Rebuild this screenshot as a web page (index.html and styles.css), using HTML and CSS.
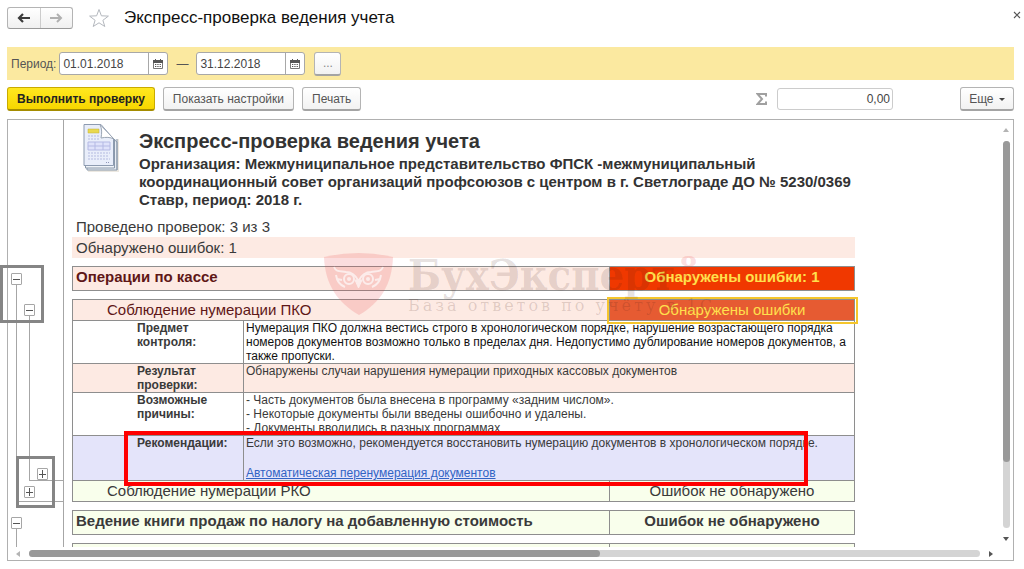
FILE: index.html
```html
<!DOCTYPE html>
<html lang="ru">
<head>
<meta charset="utf-8">
<meta name="viewport" content="width=device-width, initial-scale=1">
<title>Экспресс-проверка ведения учета</title>
<link rel="stylesheet" href="styles.css">
</head>
<body>
<header class="titlebar">
  <div class="nav">
    <button type="button" class="nav-btn" aria-label="Назад"><svg width="14" height="10" viewBox="0 0 14 10"><path d="M6 1 2 5l4 4M2.500 5H13" fill="none" stroke="#3c3c3c" stroke-width="2.200"/></svg></button>
    <button type="button" class="nav-btn" aria-label="Вперед"><svg width="14" height="10" viewBox="0 0 14 10"><path d="m8 1 4 4-4 4M11.500 5H1" fill="none" stroke="#b0b0b0" stroke-width="2"/></svg></button>
  </div>
  <button type="button" class="icon-btn star" aria-label="В избранное"><svg width="22" height="20" viewBox="0 0 22 20"><path d="m11 1.500 2.400 6.300 7 .3-5.500 4.200 1.900 6.200L11 14.800l-5.800 3.700 1.900-6.200L1.600 8.100l7-.3z" fill="#fff" stroke="#b4b8be"/></svg></button>
  <h1 class="title">Экспресс-проверка ведения учета</h1>
  <button type="button" class="icon-btn close" aria-label="Закрыть"><svg width="8" height="8" viewBox="0 0 8 8"><path d="m1 1 6 6M7 1 1 7" stroke="#555" stroke-width="1.100"/></svg></button>
</header>

<section class="period">
  <label for="from">Период:</label>
  <div class="field">
    <input id="from" type="text" value="01.01.2018">
    <button type="button" aria-label="Выбрать начало"><svg width="10" height="10" viewBox="0 0 10 10"><path d="M.5 1.500h9v8h-9z" fill="#fff" stroke="#777"/><path d="M0 1h10v3H0zM2 0h1v2H2zM7 0h1v2H7z" fill="#555"/><path d="M2 5.500h6M2 7.500h6" stroke="#555" stroke-dasharray="1.300 1"/></svg></button>
  </div>
  <span class="dash">—</span>
  <div class="field">
    <input type="text" value="31.12.2018" aria-label="Конец периода">
    <button type="button" aria-label="Выбрать конец"><svg width="10" height="10" viewBox="0 0 10 10"><path d="M.5 1.500h9v8h-9z" fill="#fff" stroke="#777"/><path d="M0 1h10v3H0zM2 0h1v2H2zM7 0h1v2H7z" fill="#555"/><path d="M2 5.500h6M2 7.500h6" stroke="#555" stroke-dasharray="1.300 1"/></svg></button>
  </div>
  <button type="button" class="btn more-dots">...</button>
</section>

<section class="commands">
  <button type="button" class="btn primary">Выполнить проверку</button>
  <button type="button" class="btn">Показать настройки</button>
  <button type="button" class="btn">Печать</button>
  <label class="sigma" for="sum" aria-label="Сумма"><svg width="11" height="12" viewBox="0 0 11 12"><path d="M10 3.500V1H1.500L6 6l-4.500 5H10V8.500" fill="none" stroke="#a0a0a0" stroke-width="2"/></svg></label>
  <input id="sum" class="sum" type="text" value="0,00">
  <button type="button" class="btn more">Еще <span class="caret"></span></button>
</section>

<main class="viewer">
  <div class="outline">
    <div class="node first">
      <button type="button" class="toggle" aria-label="Свернуть"></button>
      <div class="branch outer">
        <div class="node">
          <button type="button" class="toggle" aria-label="Свернуть"></button>
          <div class="branch inner">
            <button type="button" class="toggle plus" aria-label="Развернуть"></button>
          </div>
        </div>
        <button type="button" class="toggle plus" aria-label="Развернуть"></button>
      </div>
    </div>
    <div class="node last">
      <button type="button" class="toggle" aria-label="Свернуть"></button>
      <div class="branch open"></div>
    </div>
  </div>

  <div class="sheet">
    <div class="report">
      <div class="head">
        <svg class="doc" width="38" height="50" viewBox="0 0 38 50">
          <path d="M5 5h27l4 8v35H5z" fill="#d9d2c4" opacity=".5"/>
          <path d="M4 5h30v41H4z" fill="#e8edf4" stroke="#8a99ab"/>
          <path d="M2.500 3h29v41h-29z" fill="#eff3f8" stroke="#8a99ab"/>
          <path d="M17 0h20v15H30.500z" fill="#fff"/>
          <path d="M1 .5h17L30.500 15v26.500H1z" fill="#e9eefa" stroke="#8d9bb0"/>
          <path d="M30.500 15 34 18v28" fill="none" stroke="#8a99ab"/>
          <path d="M17 .5 31 15c-4-2-8-2-13-1 1-5 1-9-1-13.500z" fill="#fff" stroke="#9aa5b4"/>
          <path d="M5 5h11v4H5z" fill="#e9d94f" stroke="#c3b23c" stroke-width=".5"/>
          <path d="M5 12h11M5 15h12" stroke="#b4bbe0" stroke-dasharray="2 1"/>
          <path d="M5 18h22v8H5zM5 22h22M12 18v8M20 18v8" fill="#dfe2fa" stroke="#b4b9e4"/>
          <path d="M5 29h22M5 32h21M5 35h22" stroke="#b4bbe0" stroke-dasharray="2 1"/>
          <path d="M23 38.500h4" stroke="#8f96b8" stroke-dasharray="1 1"/>
        </svg>
        <div>
          <h2>Экспресс-проверка ведения учета</h2>
          <p class="org">Организация: Межмуниципальное представительство ФПСК -межмуниципальный<br>координационный совет организаций профсоюзов с центром в г. Светлограде ДО № 5230/0369<br>Ставр, период: 2018 г.</p>
        </div>
      </div>
      <p class="stat">Проведено проверок: 3 из 3</p>
      <p class="stat bad">Обнаружено ошибок: 1</p>

      <table class="tbl section">
        <colgroup><col><col class="c-status"></colgroup>
        <tr class="bad"><th scope="row">Операции по кассе</th><td class="status alarm">Обнаружены ошибки: 1</td></tr>
      </table>

      <table class="tbl checks">
        <colgroup><col class="c-label"><col><col class="c-status"></colgroup>
        <tr class="check bad"><td colspan="2" class="name">Соблюдение нумерации ПКО</td><td class="status alarm selected">Обнаружены ошибки</td></tr>
        <tr class="detail subject"><th scope="row">Предмет контроля:</th><td colspan="2">Нумерация ПКО должна вестись строго в хронологическом порядке, нарушение возрастающего порядка<br>номеров документов возможно только в пределах дня. Недопустимо дублирование номеров документов, а<br>также пропуски.</td></tr>
        <tr class="detail bad"><th scope="row">Результат проверки:</th><td colspan="2">Обнаружены случаи нарушения нумерации приходных кассовых документов</td></tr>
        <tr class="detail"><th scope="row">Возможные причины:</th><td colspan="2">- Часть документов была внесена в программу «задним числом».<br>- Некоторые документы были введены ошибочно и удалены.<br>- Документы вводились в разных программах</td></tr>
        <tr class="detail advice"><th scope="row">Рекомендации:</th><td colspan="2"><p>Если это возможно, рекомендуется восстановить нумерацию документов в хронологическом порядке.</p><a href="#">Автоматическая перенумерация документов</a></td></tr>
        <tr class="check good"><td colspan="2" class="name">Соблюдение нумерации РКО</td><td class="status">Ошибок не обнаружено</td></tr>
      </table>

      <table class="tbl section">
        <colgroup><col><col class="c-status"></colgroup>
        <tr class="good"><th scope="row">Ведение книги продаж по налогу на добавленную стоимость</th><td class="status">Ошибок не обнаружено</td></tr>
      </table>
      <table class="tbl section">
        <colgroup><col><col class="c-status"></colgroup>
        <tr class="good"><td></td><td></td></tr>
      </table>

      <div class="watermark">
        <svg width="70" height="62" viewBox="0 0 70 62">
          <path d="M0 4Q35-4 69 4C68 32 56 50 35 62 14 50 1 32 0 4z" fill="#e8353c" opacity=".17"/>
          <g fill="none" stroke="#fff" opacity=".65">
            <circle cx="25" cy="26" r="5" stroke-width="2"/><circle cx="44" cy="26" r="5" stroke-width="2"/>
            <path d="M10 14c2 5 6 4 12 5 6 0 10 4 12.500 9C37 23 41 19 47 19c6-1 10 0 12-5M12 22c1 7 4 10 9 12M57 22c-1 7-4 10-9 12M13 26l5 1M56 26l-5 1" stroke-width="2"/>
            <path d="m31 27 3.500 8 3.500-8z" fill="#fff"/>
          </g>
          <g fill="#fff" opacity=".65"><circle cx="25" cy="26" r="2"/><circle cx="44" cy="26" r="2"/></g>
        </svg>
        <div>
          <div class="brand">БухЭксперт<span class="brand-8">8</span></div>
          <div class="tagline">База ответов по учёту в 1С</div>
        </div>
      </div>
      <div class="mark mark-red"></div>
    </div>
  </div>

  <div class="vscroll"><i class="arrow up"></i><div class="track"><div class="thumb"></div></div><i class="arrow down"></i></div>
  <div class="hscroll"><i class="arrow left"></i><div class="track"><div class="thumb"></div></div><i class="arrow right"></i></div>
  <div class="mark mark-top"></div>
  <div class="mark mark-bottom"></div>
</main>
</body>
</html>
```
FILE: styles.css
```css
* { box-sizing: border-box; }
body {
  margin: 0;
  height: 100vh;
  padding: 6px 10px 8px 7px;
  display: flex;
  flex-direction: column;
  background: #fff;
  color: #444;
  font: 12px/14px "Liberation Sans", Arial, sans-serif;
}
h1, h2, p { margin: 0; }
button, input { font: inherit; color: inherit; margin: 0; }
button { padding: 0; }
svg { display: block; }

.titlebar { display: flex; align-items: center; height: 24px; }
.nav {
  display: flex;
  width: 66px;
  height: 22px;
  border: 1px solid #b4b4b4;
  border-bottom-color: #999;
  border-radius: 3px;
  background: linear-gradient(#fff, #f0f0f0);
}
.nav-btn { flex: 1; display: grid; place-items: center; border: 0; background: none; }
.nav-btn + .nav-btn { border-left: 1px solid #ccc; }
.icon-btn { border: 0; background: none; }
.star { margin: 0 14px 0 15px; }
.title { font-size: 17px; font-weight: 400; line-height: 20px; color: #111; }
.close { margin: 0 -7px 6px auto; }

.period {
  display: flex;
  align-items: center;
  height: 33px;
  margin-top: 17px;
  padding-left: 4px;
  color: #555;
  background: #fbe9a0;
}
.field {
  display: flex;
  width: 109px;
  height: 23px;
  margin-left: 3px;
  border: 1px solid #a8a8a8;
  border-radius: 3px;
  background: #fff;
  overflow: hidden;
}
.field input { flex: 1; min-width: 0; padding: 0 3px; border: 0; background: none; color: #444; }
.field button { width: 19px; display: grid; place-items: center; border: 0; border-left: 1px solid #a8a8a8; background: none; }
.dash { margin: 0 5px 0 8px; }
.btn {
  height: 24px;
  padding: 0 9px;
  border: 1px solid #b4b4b4;
  border-bottom: 2px solid #a4a4a4;
  border-radius: 3px;
  background: linear-gradient(#fff, #f2f2f2);
  color: #555;
}
.more-dots { width: 27px; margin-left: 9px; padding: 0; color: #888; }

.commands { display: flex; align-items: center; gap: 8px; height: 24px; margin: 7px 0 8px; }
.btn.primary {
  color: #222;
  font-weight: 700;
  border-color: #c9ab00;
  border-bottom-color: #a58c00;
  background: linear-gradient(#ffe81f, #f7d600);
}
.sigma { margin-left: auto; }
.sum { width: 116px; height: 22px; margin: 0 59px 0 2px; padding: 0 2px; border: 1px solid #ccc; border-radius: 3px; text-align: right; }
.more { width: 54px; padding: 0; }
.caret { display: inline-block; margin-left: 2px; vertical-align: middle; border: 3px solid transparent; border-top-color: #444; border-bottom: 0; }

.viewer {
  position: relative;
  flex: 1;
  min-height: 0;
  display: grid;
  grid-template: minmax(0, 1fr) 13px / 56px minmax(0, 1fr) 14px;
  border: 1px solid #b0b0b0;
}

.outline { border-right: 1px solid #a6a6a6; overflow: hidden; }
.first { padding-top: 153px; }
.last { padding-top: 15px; }
.outline > .node > .toggle { margin-left: 3px; }
.toggle {
  display: block;
  width: 11px;
  height: 12px;
  border: 1px solid #a6a6a6;
  border-radius: 1px;
  background: linear-gradient(#555, #555) center / 7px 1px no-repeat, #fff;
}
.plus { background: linear-gradient(#555, #555) center / 7px 1px no-repeat, linear-gradient(#555, #555) center / 1px 8px no-repeat, #fff; }
.branch { border-left: 1px solid #a6a6a6; border-bottom: 1px solid #a6a6a6; margin-left: 8px; }
.outer { height: 217px; padding-top: 19px; }
.outer > .node > .toggle, .outer > .toggle { margin-left: 7px; }
.inner { height: 165px; margin-left: 12px; padding-top: 152px; }
.inner > .toggle { margin-left: 7px; }
.outer > .toggle { margin-top: 5px; }
.open { height: 40px; }

.sheet { overflow: hidden; padding-left: 8px; }
.report { position: relative; max-width: 783px; color: #3a3a3a; }
.head { display: flex; gap: 18px; padding: 4px 0 0 11px; height: 96px; }
.head h2 { margin-top: 5px; font-size: 20px; line-height: 24px; color: #333; }
.org { margin-top: 2px; font-size: 15px; line-height: 18px; font-weight: 700; color: #333; white-space: nowrap; }
.doc { flex: none; }
.stat { padding-left: 4px; font-size: 15px; line-height: 21px; }
.bad { background: #fdeae3; }
.good { background: #f9ffec; }

.tbl { width: 100%; table-layout: fixed; border-collapse: collapse; margin-top: 8px; }
.tbl th, .tbl td { border: 1px solid #8e8e8e; padding: 0; text-align: left; vertical-align: top; }
.c-status { width: 245px; }
.c-label { width: 171px; }
.section th, .section td { height: 24px; font-size: 15px; line-height: 20px; font-weight: 700; }
.section th { padding-left: 3px; }
.section .bad th, .check.bad .name { color: #5f1717; }
.tbl .status { padding: 0; text-align: center; }
.tbl .alarm { background: #f03800; color: #ffe04c; }
.tbl .selected { background: #e65b32; outline: 2px solid #f5c62c; outline-offset: 1px; }
.check td { height: 21px; font-size: 15px; line-height: 20px; }
.tbl .name { padding-left: 34px; }
.tbl .detail th { padding: 0 10px 0 64px; }
.tbl .detail td { padding-left: 2px; white-space: nowrap; }
.subject td { color: #111; }
.advice { background: #e4e4fa; }
.advice p { margin-bottom: 16px; }
.advice a { color: #3163c4; }

.watermark { position: absolute; left: 252px; top: 133px; display: flex; gap: 14px; pointer-events: none; }
.brand { font: 700 43px/44px "DejaVu Serif Condensed", "DejaVu Serif", serif; color: rgba(70, 30, 20, .14); white-space: nowrap; }
.brand-8 { margin-left: 4px; font-size: 30px; line-height: 30px; vertical-align: top; color: rgba(232, 53, 60, .17); }
.tagline { font: 16px/18px "DejaVu Serif", serif; letter-spacing: 3px; color: rgba(70, 30, 20, .16); white-space: nowrap; }

.mark { position: absolute; pointer-events: none; }
.mark-red { left: 52px; top: 311px; width: 684px; height: 55px; border: 4px solid #f00; }
.mark-top { left: -8px; top: 145px; width: 44px; height: 58px; border: 3px solid #858585; }
.mark-bottom { left: 8px; top: 336px; width: 39px; height: 52px; border: 3px solid #858585; }

.vscroll { display: flex; flex-direction: column; align-items: center; gap: 9px; padding: 8px 0 6px; }
.hscroll { grid-column: 1 / -1; display: flex; align-items: center; gap: 9px; padding: 0 20px 0 8px; }
.track { flex: 1; border-radius: 4px; background: #d4d4d4; }
.thumb { border-radius: 4px; background: #999; }
.vscroll .track { width: 7px; }
.vscroll .thumb { width: 7px; height: 83%; }
.hscroll .track { height: 7px; }
.hscroll .thumb { width: 60%; height: 7px; }
.arrow { border: 3px solid transparent; }
.up { border-bottom: 4px solid #b4b4b4; border-top: 0; }
.down { border-top: 4px solid #555; border-bottom: 0; }
.left { border-right: 4px solid #b4b4b4; border-left: 0; }
.right { border-left: 4px solid #555; border-right: 0; }
```
